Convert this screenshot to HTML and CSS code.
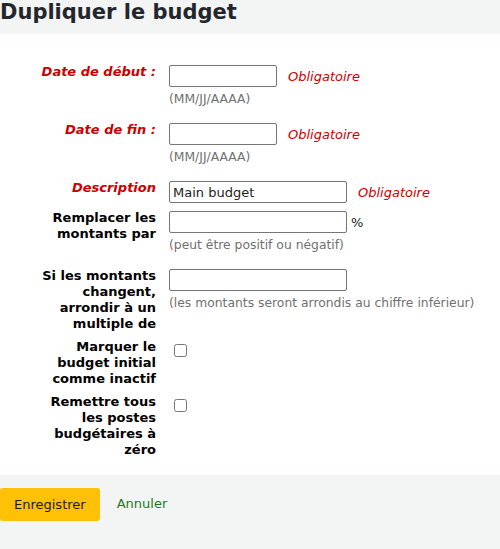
FILE: index.html
```html
<!DOCTYPE html>
<html lang="fr">
<head>
<meta charset="utf-8">
<title>Dupliquer le budget</title>
<link rel="stylesheet" href="styles.css">
</head>
<body>
<h1 class="page-title">Dupliquer le budget</h1>
<form class="dup-form">
  <div class="rows">
    <div class="row">
      <label class="lbl required">Date de début :</label>
      <div class="field">
        <div class="line"><input class="inp short" type="text"><span class="req">Obligatoire</span></div>
        <div class="hint">(MM/JJ/AAAA)</div>
      </div>
    </div>
    <div class="row">
      <label class="lbl required">Date de fin :</label>
      <div class="field">
        <div class="line"><input class="inp short" type="text"><span class="req">Obligatoire</span></div>
        <div class="hint">(MM/JJ/AAAA)</div>
      </div>
    </div>
    <div class="row">
      <label class="lbl required">Description</label>
      <div class="field">
        <div class="line"><input class="inp long" type="text" value="Main budget"><span class="req">Obligatoire</span></div>
      </div>
    </div>
    <div class="row">
      <label class="lbl">Remplacer les montants par</label>
      <div class="field">
        <div class="line"><input class="inp long" type="text"><span class="unit">%</span></div>
        <div class="hint">(peut être positif ou négatif)</div>
      </div>
    </div>
    <div class="row">
      <label class="lbl">Si les montants changent, arrondir à un multiple de</label>
      <div class="field">
        <div class="line"><input class="inp long" type="text"></div>
        <div class="hint">(les montants seront arrondis au chiffre inférieur)</div>
      </div>
    </div>
    <div class="row">
      <label class="lbl">Marquer le budget initial comme inactif</label>
      <div class="field">
        <input class="chk" type="checkbox">
      </div>
    </div>
    <div class="row">
      <label class="lbl">Remettre tous les postes budgétaires à zéro</label>
      <div class="field">
        <input class="chk" type="checkbox">
      </div>
    </div>
  </div>
  <div class="actions">
    <button class="btn-save" type="button">Enregistrer</button>
    <a class="cancel" href="#">Annuler</a>
  </div>
</form>
</body>
</html>
```
FILE: styles.css
```css
html {
  background: #f3f4f4;
}
html, body {
  margin: 0;
  padding: 0;
  font-family: "DejaVu Sans", sans-serif;
  font-size: 13px;
  color: #000;
}
body {
  min-height: 100vh;
  display: flex;
  flex-direction: column;
}
.page-title {
  margin: 0;
  height: 34px;
  flex: none;
  background: #f3f4f4;
  font-size: 21px;
  line-height: 24px;
  font-weight: bold;
  color: #23272b;
  padding: 0;
}
.dup-form {
  margin: 0;
  flex: 1;
  display: flex;
  flex-direction: column;
}
.rows {
  background: #ffffff;
  display: flex;
  flex-direction: column;
  gap: 7px;
  padding: 30px 0 17px 0;
}
.row {
  display: grid;
  grid-template-columns: 118px 1fr;
  column-gap: 13px;
  padding-left: 38px;
  align-items: start;
}
.lbl {
  font-weight: bold;
  text-align: right;
  line-height: 16px;
  color: #000;
}
.lbl.required {
  color: #cc0000;
  font-style: italic;
}
.field {
  padding-top: 1px;
}
.line {
  display: flex;
  align-items: center;
}
.inp {
  box-sizing: border-box;
  height: 22px;
  border: 1px solid #767676;
  border-radius: 2px;
  padding: 1px 3px;
  font-family: "DejaVu Sans", sans-serif;
  font-size: 13px;
  color: #222;
  margin: 0;
  background: #fff;
}
.inp.short { width: 108px; }
.inp.long { width: 178px; }
.req {
  color: #cc0000;
  font-style: italic;
  margin-left: 11px;
}
.unit {
  margin-left: 4px;
  color: #222;
}
.hint {
  color: #707070;
  font-size: 12.35px;
  line-height: 16px;
  margin: 4px 0 8px 0;
  white-space: nowrap;
}
.chk {
  margin: 4px 0 0 5px;
  width: 13px;
  height: 13px;
}
.actions {
  flex: 1;
  background: #f3f4f4;
  padding: 13px 0 0 0;
  display: flex;
  align-items: flex-start;
  gap: 17px;
}
.btn-save {
  background: #ffc107;
  border: none;
  border-radius: 3px;
  font-family: "DejaVu Sans", sans-serif;
  font-size: 13px;
  line-height: 16px;
  padding: 9px 14px 8px 14px;
  color: #1a1a1a;
  margin: 0;
}
.cancel {
  color: #1a7a1a;
  text-decoration: none;
  font-size: 13px;
  line-height: 16px;
  margin-top: 8px;
}
```
